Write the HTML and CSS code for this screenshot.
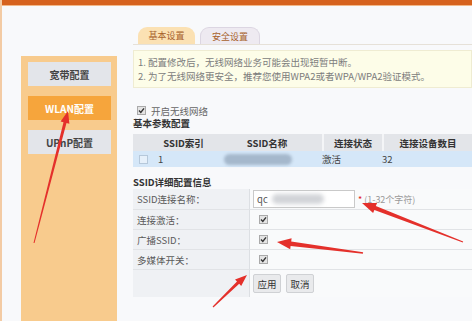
FILE: index.html
```html
<!DOCTYPE html>
<html lang="zh-CN">
<head>
<meta charset="utf-8">
<title>WLAN配置</title>
<link rel="stylesheet" href="styles.css">
</head>
<body>
<div class="topbar"></div>
<div class="page">
  <nav class="side">
    <div class="side-item">宽带配置</div>
    <div class="side-item active">WLAN配置</div>
    <div class="side-item">UPnP配置</div>
  </nav>
  <main class="content">
    <div class="tabs">
      <div class="tab active">基本设置</div>
      <div class="tab other">安全设置</div>
    </div>
    <div class="notice">
      <div>1. 配置修改后，无线网络业务可能会出现短暂中断。</div>
      <div>2. 为了无线网络更安全，推荐您使用WPA2或者WPA/WPA2验证模式。</div>
    </div>
    <div class="wl-row">
      <svg class="cb" viewBox="0 0 9 9"><rect x=".5" y=".5" width="8" height="8" fill="#e4e4e4" stroke="#aaa"/><path d="M2 4.6 L3.8 6.4 L7 2.4" fill="none" stroke="#333" stroke-width="1.4"/></svg>
      <span>开启无线网络</span>
    </div>
    <div class="section-title">基本参数配置</div>
    <div class="ssid-table">
      <div class="th"></div>
      <div class="th">SSID索引</div>
      <div class="th">SSID名称</div>
      <div class="th sep">连接状态</div>
      <div class="th sep">连接设备数目</div>
      <div class="td cbcell"><svg class="cb" viewBox="0 0 9 9"><rect x=".5" y=".5" width="8" height="8" fill="#e6f0fa" stroke="#b6c8da"/></svg></div>
      <div class="td">1</div>
      <div class="td"><span class="blur-name"></span></div>
      <div class="td tight">激活</div>
      <div class="td tight">32</div>
    </div>
    <div class="section-title detail">SSID详细配置信息</div>
    <div class="form">
      <div class="lab r1">SSID连接名称：</div>
      <div class="val r1"><span class="input">qc<span class="blur-input"></span></span><span class="hint"><span class="star">*</span> (1-32个字符)</span></div>
      <div class="lab">连接激活：</div>
      <div class="val"><svg class="cb" viewBox="0 0 9 9"><rect x=".5" y=".5" width="8" height="8" fill="#e4e4e4" stroke="#aaa"/><path d="M2 4.6 L3.8 6.4 L7 2.4" fill="none" stroke="#333" stroke-width="1.4"/></svg></div>
      <div class="lab">广播SSID：</div>
      <div class="val"><svg class="cb" viewBox="0 0 9 9"><rect x=".5" y=".5" width="8" height="8" fill="#e4e4e4" stroke="#aaa"/><path d="M2 4.6 L3.8 6.4 L7 2.4" fill="none" stroke="#333" stroke-width="1.4"/></svg></div>
      <div class="lab">多媒体开关：</div>
      <div class="val"><svg class="cb" viewBox="0 0 9 9"><rect x=".5" y=".5" width="8" height="8" fill="#e4e4e4" stroke="#aaa"/><path d="M2 4.6 L3.8 6.4 L7 2.4" fill="none" stroke="#333" stroke-width="1.4"/></svg></div>
      <div class="lab last"></div>
      <div class="val last"><button class="btn">应用</button><button class="btn">取消</button></div>
    </div>
  </main>
</div>
<svg class="arrows" viewBox="0 0 472 321" width="472" height="321">
  <polygon points="34.5,243.1 66.5,123.0 69.4,123.7 68,111 60.6,121.5 63.5,122.2 33.5,242.9"/>
  <polygon points="463.2,241.4 375.8,206.1 377.1,202.9 362,203 373.1,213.1 374.4,209.9 462.8,242.6"/>
  <polygon points="363.1,252.2 291.2,241.6 291.6,238.3 277,242 290.2,249.3 290.6,246.0 362.9,253.8"/>
  <polygon points="213.4,307.4 239.2,283.8 241.2,285.9 247,275 235.0,279.5 237.0,281.6 212.6,306.6"/>
</svg>
</body>
</html>
```
FILE: styles.css
```css
html, body {
  margin: 0;
  padding: 0;
}
body {
  width: 472px;
  height: 321px;
  overflow: hidden;
  box-sizing: border-box;
  border-left: 2px solid #f3cba4;
  background: #f8f9fb;
  font-family: "Noto Sans CJK SC", "Noto Sans", sans-serif;
  position: relative;
}
.topbar {
  height: 5px;
  background: #d6621e;
  border-bottom: 1px solid #f2b888;
}
.page {
  display: flex;
  height: 315px;
  padding-left: 19px;
}
.side {
  width: 96px;
  flex: none;
  margin-top: 50px;
  background: #f8cb8d;
  padding: 6px 6px 0 7px;
  box-sizing: border-box;
  display: flex;
  flex-direction: column;
  gap: 10px;
}
.side-item {
  height: 24px;
  background: #e3e5ea;
  display: flex;
  align-items: center;
  justify-content: center;
  font-size: 10px;
  font-weight: bold;
  color: #444;
}
.side-item.active {
  background: #f6a53c;
  color: #fff;
}
.content {
  flex: 1;
  min-width: 0;
  margin-left: 16px;
  padding-top: 18px;
}
.tabs {
  display: flex;
  align-items: flex-end;
  gap: 5px;
  height: 20px;
  padding-left: 5px;
  border-bottom: 1px solid #e6e1d8;
}
.tab {
  height: 17px;
  width: 57px;
  box-sizing: border-box;
  border-radius: 9px 9px 0 0;
  font-size: 9px;
  color: #a8622c;
  display: flex;
  align-items: center;
  justify-content: center;
}
.tab.active {
  background: #fbe1b3;
}
.tab.other {
  width: 60px;
  background: #eeeaf1;
  border: 1px solid #dcd6e2;
  border-bottom: none;
}
.notice {
  margin-top: 5px;
  height: 38px;
  box-sizing: border-box;
  background: #fdfde8;
  border: 1px solid #efecd2;
  padding: 4px 4px;
  font-size: 9.5px;
  line-height: 14px;
  color: #7c7c7c;
  white-space: nowrap;
  overflow: hidden;
}
.wl-row {
  margin-top: 16px;
  height: 13px;
  display: flex;
  align-items: center;
  gap: 5px;
  padding-left: 4px;
  font-size: 9.5px;
  color: #666;
}
.cb {
  width: 9px;
  height: 9px;
  display: block;
  flex: none;
}
.section-title {
  height: 13px;
  line-height: 13px;
  font-size: 9.5px;
  font-weight: bold;
  color: #333;
}
.section-title.detail {
  margin-top: 8px;
  height: 14px;
  line-height: 14px;
}
.ssid-table {
  margin-top: 4px;
  display: grid;
  grid-template-columns: 22px 57px 110px 60px 1fr;
  grid-template-rows: 17px 16px;
  font-size: 9.5px;
}
.th {
  background: #e3e5e9;
  font-weight: bold;
  color: #333;
  display: flex;
  align-items: center;
  justify-content: center;
  white-space: nowrap;
}
.th.sep {
  border-left: 2px solid #f4f5f7;
}
.td {
  background: #d5e7f8;
  color: #444;
  display: flex;
  align-items: center;
  padding-left: 3px;
  white-space: nowrap;
}
.td.tight {
  padding-left: 0;
}
.td.cbcell {
  padding-left: 6px;
}
.blur-name {
  display: block;
  width: 68px;
  height: 11px;
  margin-left: 9px;
  border-radius: 6px;
  background: #a5b8cc;
  filter: blur(1.5px);
}
.form {
  display: grid;
  grid-template-columns: 117px 1fr;
  grid-template-rows: 21px 20px 20px 20px 27px;
  font-size: 9.5px;
}
.lab {
  background: #eff1f4;
  border-right: 1px solid #dcdfe3;
  border-bottom: 1px solid #e1e3e6;
  color: #5a5a5a;
  display: flex;
  align-items: center;
  padding-left: 4px;
  white-space: nowrap;
}
.val {
  background: #f9fafb;
  border-bottom: 1px solid #e1e3e6;
  display: flex;
  align-items: center;
  padding-left: 9px;
  white-space: nowrap;
}
.val.r1 {
  padding-left: 3px;
}
.lab.last, .val.last {
  border-bottom: none;
}
.val.last {
  padding-left: 3px;
  gap: 5px;
}
.input {
  width: 102px;
  height: 18px;
  box-sizing: border-box;
  background: #fff;
  border: 1px solid #c9c9c9;
  display: flex;
  align-items: center;
  padding-left: 3px;
  color: #555;
  font-size: 9.5px;
}
.blur-input {
  display: block;
  width: 52px;
  height: 10px;
  margin-left: 4px;
  background: #d2d4d8;
  border-radius: 5px;
  filter: blur(2px);
}
.hint {
  margin-left: 3px;
  color: #999;
  font-size: 9px;
}
.star {
  color: #e02020;
}
.btn {
  height: 19px;
  width: 28px;
  padding: 0;
  box-sizing: border-box;
  background: #e9eaec;
  border: 1px solid #cfd1d4;
  border-radius: 2px;
  font-family: "Noto Sans CJK SC", sans-serif;
  font-size: 9.5px;
  color: #333;
}
.arrows {
  position: absolute;
  left: -2px;
  top: 0;
  pointer-events: none;
  fill: #e4302b;
}
```
